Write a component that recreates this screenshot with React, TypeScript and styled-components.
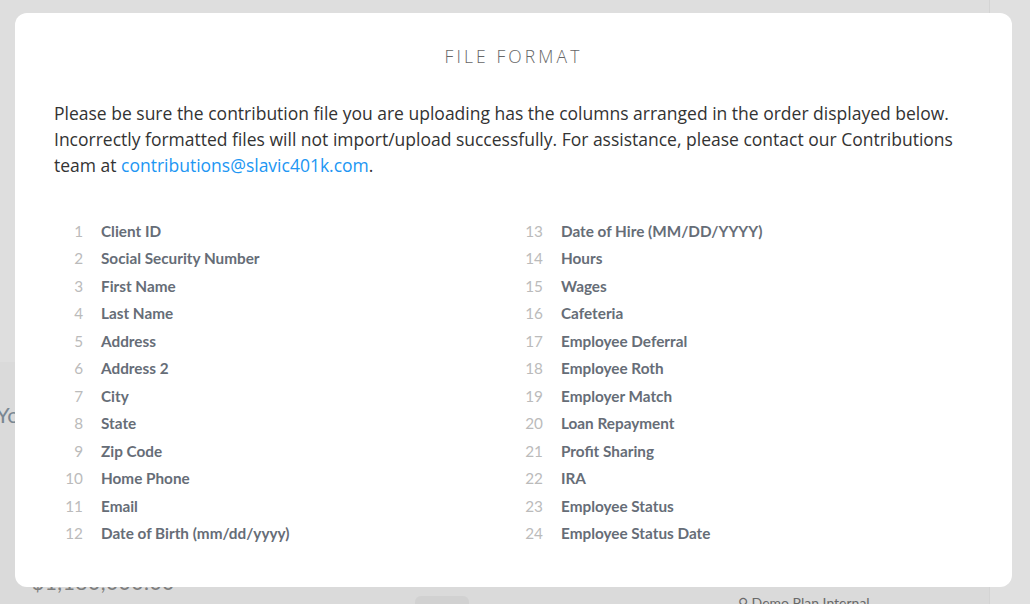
import React from "react";
import styled, { createGlobalStyle } from "styled-components";

const Global = createGlobalStyle`
  html, body { margin: 0; padding: 0; }
  body { width: 1030px; height: 604px; overflow: hidden; background: #fff; font-family: "Open Sans", sans-serif; }
`;

const Page = styled.div`
  position: relative;
  width: 1030px;
  height: 604px;
  display: flex;
  background: #f6f6f6;
  overflow: hidden;
`;

const Main = styled.div`
  flex: 1;
  display: flex;
  flex-direction: column;
`;

const TopPanel = styled.div`
  height: 362px;
  background: #fbfbfb;
`;

const MidRow = styled.div`
  height: 80px;
  display: flex;
  align-items: center;
  padding-top: 24px;
  box-sizing: border-box;
  font-family: "Lato", sans-serif;
  font-size: 22px;
  color: #8a99a6;
  margin-left: -4px;
`;

const Amount = styled.div`
  margin-top: 127px;
  padding-left: 32px;
  font-family: "Lato", sans-serif;
  font-size: 21px;
  font-weight: 400;
  letter-spacing: 0.5px;
  color: #8f8f8f;
`;

const Side = styled.div`
  width: 40px;
  background: #fdfdfd;
  border-left: 1px solid #f0f0f0;
`;

const PlanTag = styled.div`
  position: absolute;
  left: 738px;
  top: 594px;
  font-family: "Lato", sans-serif;
  font-size: 14px;
  color: #777;
`;

const Pill = styled.div`
  position: absolute;
  left: 415px;
  top: 596px;
  width: 54px;
  height: 20px;
  border-radius: 6px;
  background: #ececec;
`;

const Overlay = styled.div`
  position: absolute;
  inset: 0;
  background: rgba(0, 0, 0, 0.115);
  display: flex;
  align-items: flex-start;
  padding: 13px 0 0 15px;
`;

const Modal = styled.div`
  width: 997px;
  height: 574px;
  box-sizing: border-box;
  background: #fff;
  border-radius: 12px;
  padding: 32px 39px 40px 39px;
  display: flex;
  flex-direction: column;
`;

const Title = styled.h2`
  margin: 0;
  text-align: center;
  font-family: "Open Sans", sans-serif;
  font-weight: 300;
  font-size: 17.5px;
  line-height: 22px;
  letter-spacing: 3.1px;
  color: #666;
`;

const Intro = styled.p`
  margin: 33px 0 0 0;
  font-family: "Open Sans", sans-serif;
  font-size: 17.5px;
  line-height: 26px;
  color: #333;
`;

const Mail = styled.a`
  color: #2196f3;
  text-decoration: none;
`;

const Columns = styled.div`
  margin-top: 39px;
  display: grid;
  grid-template-columns: 460px 460px;
`;

const List = styled.ol`
  list-style: none;
  margin: 0;
  padding: 0;
`;

const Item = styled.li`
  display: flex;
  align-items: center;
  height: 27.5px;
  font-family: "Lato", sans-serif;
  font-size: 15.3px;
`;

const Num = styled.span`
  width: 29px;
  text-align: right;
  color: #bbbbbb;
  font-weight: 400;
  margin-right: 18px;
`;

const Label = styled.span`
  color: #666d77;
  font-weight: 700;
`;

const left = [
  "Client ID",
  "Social Security Number",
  "First Name",
  "Last Name",
  "Address",
  "Address 2",
  "City",
  "State",
  "Zip Code",
  "Home Phone",
  "Email",
  "Date of Birth (mm/dd/yyyy)",
];

const right = [
  "Date of Hire (MM/DD/YYYY)",
  "Hours",
  "Wages",
  "Cafeteria",
  "Employee Deferral",
  "Employee Roth",
  "Employer Match",
  "Loan Repayment",
  "Profit Sharing",
  "IRA",
  "Employee Status",
  "Employee Status Date",
];

export default function App() {
  return (
    <>
      <Global />
      <Page>
        <Main>
          <TopPanel />
          <MidRow>Yo</MidRow>
          <Amount>$1,180,000.00</Amount>
        </Main>
        <Side />
        <Pill />
        <PlanTag>⚲ Demo Plan Internal</PlanTag>
        <Overlay>
          <Modal>
            <Title>FILE FORMAT</Title>
            <Intro>
              Please be sure the contribution file you are uploading has the columns arranged in the order displayed below.
              Incorrectly formatted files will not import/upload successfully. For assistance, please contact our Contributions
              team at <Mail href="#">contributions@slavic401k.com</Mail>.
            </Intro>
            <Columns>
              <List>
                {left.map((l, i) => (
                  <Item key={l}>
                    <Num>{i + 1}</Num>
                    <Label>{l}</Label>
                  </Item>
                ))}
              </List>
              <List>
                {right.map((l, i) => (
                  <Item key={l}>
                    <Num>{i + 13}</Num>
                    <Label>{l}</Label>
                  </Item>
                ))}
              </List>
            </Columns>
          </Modal>
        </Overlay>
      </Page>
    </>
  );
}
